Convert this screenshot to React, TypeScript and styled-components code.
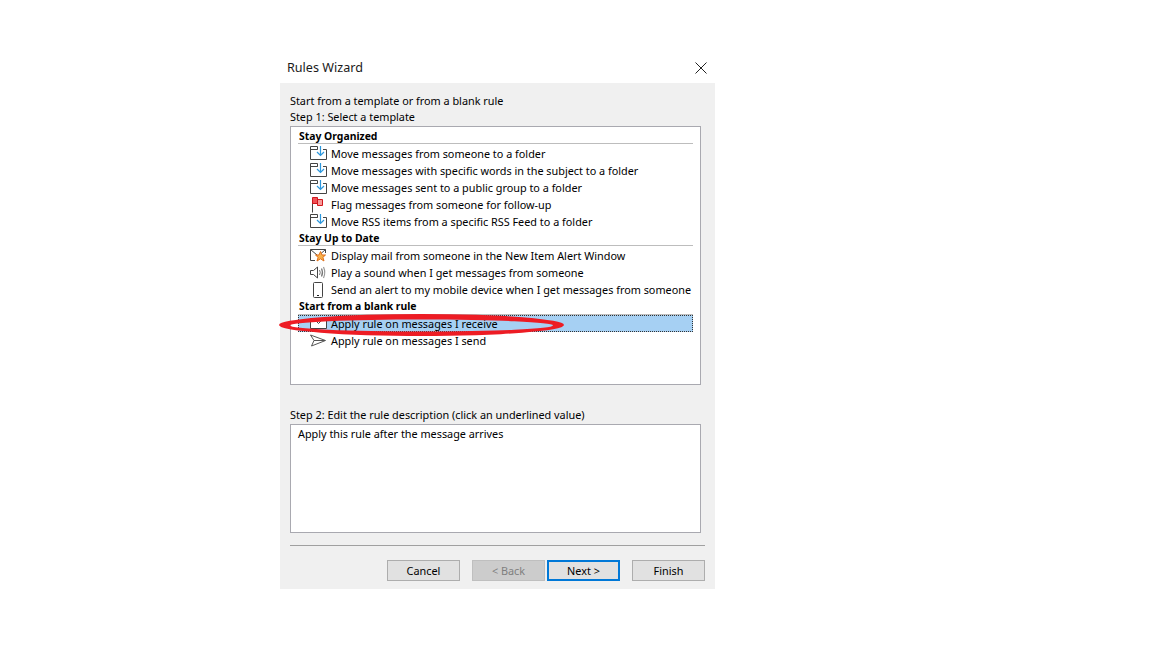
import React from 'react';
import styled, { createGlobalStyle } from 'styled-components';

const GlobalStyle = createGlobalStyle`
    html, body {
        margin: 0;
        padding: 0;
        background: #ffffff;
    }
    body {
        font-family: "Noto Sans", "Open Sans", sans-serif;
        font-size: 10.85px;
        color: #000000;
    }
`;

const Dialog = styled.div`
    width: 435px;
    margin: 50px 0 0 280px;
`;

const TitleBar = styled.div`
    height: 33px;
    display: flex;
    align-items: center;
    justify-content: space-between;
    padding: 2px 8px 0 7px;
    box-sizing: border-box;
    font-size: 12.6px;
    color: #1a1a1a;
`;

const CloseButton = styled.button`
    width: 12px;
    height: 12px;
    padding: 0;
    border: 0;
    background: none;
    display: flex;
`;

const Body = styled.div`
    height: 506px;
    background: #f0f0f0;
    padding: 10px 10px 0;
    box-sizing: border-box;
    display: flex;
    flex-direction: column;
`;

const Label = styled.div`
    height: 16px;
    line-height: 16px;
`;

const TemplateBox = styled.div`
    width: 411px;
    height: 259px;
    box-sizing: border-box;
    margin-top: 1px;
    padding: 2px 7px 0;
    background: #ffffff;
    border: 1px solid #a9a9b0;
`;

const GroupHeading = styled.div<{ $tight?: boolean }>`
    height: ${props => (props.$tight ? 15 : 14)}px;
    line-height: 14px;
    margin-bottom: ${props => (props.$tight ? 0 : 2)}px;
    padding-left: 1px;
    font-size: 10.4px;
    font-weight: 700;
    border-bottom: 1px solid #bdbdbd;
`;

const Row = styled.div<{ $selected?: boolean }>`
    position: relative;
    height: 17px;
    display: flex;
    align-items: center;
    padding: 0 0 ${props => (props.$selected ? 0 : 2)}px 12px;
    margin-bottom: ${props => (props.$selected ? 1 : 0)}px;
    box-sizing: border-box;
    white-space: nowrap;
    background: ${props => (props.$selected ? '#a6d0f3' : 'transparent')};
    outline: ${props => (props.$selected ? '1px dotted #333333' : 'none')};
    outline-offset: -1px;
`;

const RowIcon = styled.svg`
    width: 18px;
    height: 17px;
    flex: none;
    align-self: flex-start;
    margin-right: 3px;
`;

const Highlight = styled.svg`
    position: absolute;
    left: -19px;
    top: -2px;
    width: 287px;
    height: 24px;
    pointer-events: none;
`;

const StepTwoLabel = styled(Label)`
    margin-top: 22px;
`;

const DescriptionBox = styled.div`
    width: 411px;
    height: 109px;
    box-sizing: border-box;
    margin-top: 1px;
    padding: 1px 7px;
    line-height: 16px;
    background: #ffffff;
    border: 1px solid #a9a9b0;
`;

const Separator = styled.div`
    margin-top: 12px;
    width: 415px;
    border-top: 1px solid #a0a0a0;
`;

const ButtonRow = styled.div`
    margin-top: 14px;
    width: 415px;
    display: flex;
    justify-content: flex-end;
`;

const Button = styled.button<{ $primary?: boolean; $gap?: number }>`
    width: 73px;
    height: 21px;
    padding: 0;
    margin-left: ${props => props.$gap ?? 0}px;
    box-sizing: border-box;
    font: inherit;
    color: #000000;
    background: #e1e1e1;
    border: ${props => (props.$primary ? '2px solid #0078d7' : '1px solid #adadad')};
    &:disabled {
        color: #7f7f7f;
        background: #cccccc;
        border-color: #bfbfbf;
    }
`;

const MoveIcon = () => (
    <RowIcon viewBox="0 0 18 17">
        <path d="M0.5 0.5H7.5V3.5H16.5V13.5H0.5Z" fill="#fff" stroke="#444" />
        <path d="M0.5 3.5H7.5" stroke="#444" />
        <path d="M8 0H13V9H8Z" fill="#fff" />
        <path d="M10.5 0V9M7 6L10.5 9.5L14 6" fill="none" stroke="#2b97dd" strokeWidth="1.2" />
    </RowIcon>
);

const FlagIcon = () => (
    <RowIcon viewBox="0 0 18 17">
        <path d="M2.5 6V15.5" stroke="#444" />
        <path d="M7.5 2.5H12.5V8.5H7.5Z" fill="#f79a9a" stroke="#d0161c" />
        <path d="M2.5 0.5H7.5V6.5H2.5Z" fill="#f05056" stroke="#d0161c" />
    </RowIcon>
);

const AlertIcon = () => (
    <RowIcon viewBox="0 0 18 17">
        <path d="M5 12.5H0.5V1.5H15.5V5" fill="#fff" stroke="#444" />
        <path d="M0.5 1.5L7 7M15.5 1.5L11 5.5" fill="none" stroke="#444" />
        <path
            d="M10.5 3.5L12 7H15.5L12.9 9.3L14 13L10.5 10.8L7 13L8.1 9.3L5.5 7H9Z"
            fill="#f8b04a"
            stroke="#e0701a"
        />
    </RowIcon>
);

const SoundIcon = () => (
    <RowIcon viewBox="0 0 18 17">
        <path d="M0.5 5.5H3.5L7.5 2V13L3.5 9.5H0.5Z" fill="none" stroke="#444" />
        <path d="M9.5 5Q11 7.5 9.5 10" fill="none" stroke="#777" />
        <path d="M11.5 3.5Q13.5 7.5 11.5 11.5" fill="none" stroke="#777" strokeWidth="1.2" />
        <path d="M13.5 2Q16 7.5 13.5 13" fill="none" stroke="#999" strokeWidth="1.2" />
    </RowIcon>
);

const MobileIcon = () => (
    <RowIcon viewBox="0 0 18 17">
        <rect x="3.5" y="0.5" width="9" height="15" rx="1" fill="#fff" stroke="#444" />
        <path d="M7 13.5H9" stroke="#222" />
    </RowIcon>
);

const ReceiveIcon = () => (
    <RowIcon viewBox="0 0 18 17">
        <path d="M0.5 3.5H16.5V13.5H0.5Z" fill="#fff" stroke="#444" />
        <path d="M6 6L8.5 8.5L11 6" fill="none" stroke="#444" />
    </RowIcon>
);

const SendIcon = () => (
    <RowIcon viewBox="0 0 18 17">
        <path d="M0.5 2L15.5 7.5L1.5 13L4 7.5Z" fill="#fff" stroke="#555" />
        <path d="M4 7.5H15" stroke="#555" />
    </RowIcon>
);

export default function App() {
    return (
        <Dialog>
            <GlobalStyle />
            <TitleBar>
                <span>Rules Wizard</span>
                <CloseButton aria-label="Close">
                    <svg width="12" height="12" viewBox="0 0 12 12">
                        <path d="M0.5 0.5L11.5 11.5M11.5 0.5L0.5 11.5" stroke="#222" />
                    </svg>
                </CloseButton>
            </TitleBar>
            <Body>
                <Label>Start from a template or from a blank rule</Label>
                <Label>Step 1: Select a template</Label>
                <TemplateBox>
                    <GroupHeading>Stay Organized</GroupHeading>
                    <Row><MoveIcon />Move messages from someone to a folder</Row>
                    <Row><MoveIcon />Move messages with specific words in the subject to a folder</Row>
                    <Row><MoveIcon />Move messages sent to a public group to a folder</Row>
                    <Row><FlagIcon />Flag messages from someone for follow-up</Row>
                    <Row><MoveIcon />Move RSS items from a specific RSS Feed to a folder</Row>
                    <GroupHeading>Stay Up to Date</GroupHeading>
                    <Row><AlertIcon />Display mail from someone in the New Item Alert Window</Row>
                    <Row><SoundIcon />Play a sound when I get messages from someone</Row>
                    <Row><MobileIcon />Send an alert to my mobile device when I get messages from someone</Row>
                    <GroupHeading $tight>Start from a blank rule</GroupHeading>
                    <Row $selected>
                        <ReceiveIcon />Apply rule on messages I receive
                        <Highlight viewBox="0 0 287 24">
                            <path
                                fillRule="evenodd"
                                fill="#ed1c24"
                                d="M0 12A142.5 11 0 1 0 285 12A142.5 11 0 1 0 0 12ZM11 12.5A131.5 6 0 1 1 274 12.5A131.5 6 0 1 1 11 12.5Z"
                            />
                        </Highlight>
                    </Row>
                    <Row><SendIcon />Apply rule on messages I send</Row>
                </TemplateBox>
                <StepTwoLabel>Step 2: Edit the rule description (click an underlined value)</StepTwoLabel>
                <DescriptionBox>Apply this rule after the message arrives</DescriptionBox>
                <Separator />
                <ButtonRow>
                    <Button>Cancel</Button>
                    <Button disabled $gap={12}>&lt; Back</Button>
                    <Button $primary $gap={2}>Next &gt;</Button>
                    <Button $gap={12}>Finish</Button>
                </ButtonRow>
            </Body>
        </Dialog>
    );
}
